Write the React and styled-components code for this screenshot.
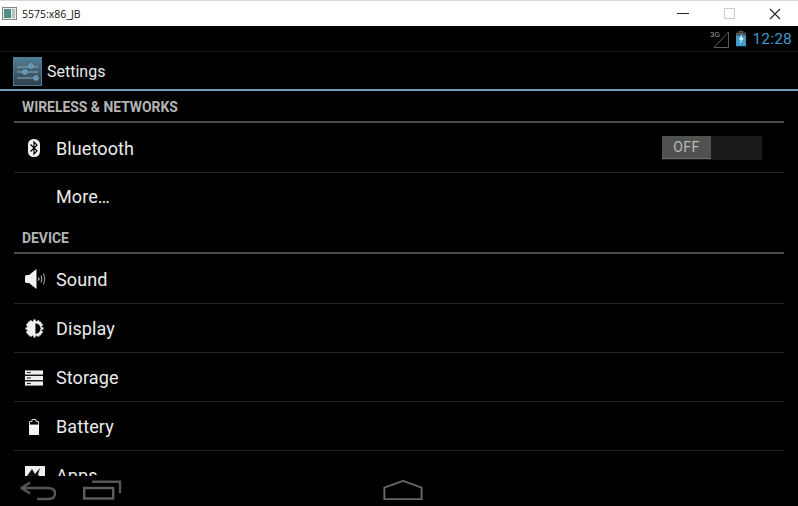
import React from 'react';
import styled, { createGlobalStyle } from 'styled-components';

const Global = createGlobalStyle`
    html, body { margin: 0; padding: 0; background: #000; }
    * { box-sizing: border-box; }
`

const Window = styled.div`
    width: 798px;
    height: 506px;
    display: flex;
    flex-direction: column;
    overflow: hidden;
    background: #000;
    font-family: Roboto, "Liberation Sans", sans-serif;
`

const TitleBar = styled.div`
    height: 26px;
    flex: none;
    display: flex;
    align-items: center;
    background: #fff;
    border-top: 1px solid #d8d8d8;
    padding-left: 2px;
`

const WindowTitle = styled.div`
    font-family: "Open Sans", "Liberation Sans", sans-serif;
    font-size: 10.5px;
    color: #111;
    margin-left: 4px;
    flex: 1;
`

const WindowButton = styled.div`
    width: 46px;
    height: 25px;
    display: flex;
    align-items: center;
    justify-content: center;
`

const StatusBar = styled.div`
    height: 26px;
    flex: none;
    display: flex;
    align-items: center;
    justify-content: flex-end;
    padding-right: 6px;
    border-bottom: 1px solid #141414;
`

const Clock = styled.div`
    font-size: 15.5px;
    color: #3f9cc6;
    margin-left: 6px;
    letter-spacing: 0.2px;
`

const ActionBar = styled.div`
    height: 39px;
    flex: none;
    display: flex;
    align-items: center;
    padding: 3px 0 0 13px;
    border-bottom: 2px solid #6f9dc0;
`

const ActionTitle = styled.div`
    font-size: 16px;
    color: #e8e8e8;
    margin: 0 0 2px 4px;
`

const List = styled.div`
    flex: 1;
    min-height: 0;
    overflow: hidden;
    padding: 0 14px;
`

const Header = styled.div`
    height: 32px;
    display: flex;
    align-items: flex-end;
    padding: 0 0 6px 8px;
    border-bottom: 2px solid #4a4a4a;
    font-size: 13.9px;
    font-weight: 700;
    color: #b4b4b4;
`

const Row = styled.div`
    height: ${props => props.$first ? 50 : 49}px;
    display: flex;
    align-items: center;
    border-bottom: ${props => props.$plain ? 'none' : '1px solid #262626'};
`

const IconSlot = styled.div`
    width: 42px;
    height: 20px;
    padding-left: ${props => props.$inset || 11}px;
    margin-top: 1px;
    flex: none;
    display: flex;
    align-items: center;
`

const Label = styled.div`
    font-size: 18px;
    color: #ebebeb;
    flex: 1;
    letter-spacing: 0.1px;
    padding-top: ${props => props.$top || 0}px;
    padding-bottom: ${props => props.$bottom || 0}px;
`

const Toggle = styled.div`
    width: 100px;
    height: 24px;
    background: #191c1a;
    margin-right: 22px;
`

const Thumb = styled.div`
    width: 49px;
    height: 23px;
    background: #505250;
    border-bottom: 1px solid #6a6a6a;
    display: flex;
    align-items: center;
    justify-content: center;
    font-size: 14px;
    letter-spacing: 0.5px;
    color: #b8b8b8;
    padding-top: 1px;
`

const NavBar = styled.div`
    height: 30px;
    flex: none;
    display: flex;
    align-items: center;
    background: #000;
    padding-left: 20px;
`

const NavSlot = styled.div`
    width: ${props => props.$w}px;
    height: 22px;
    flex: none;
    display: flex;
`

const AppFrameIcon = () => (
    <svg width="16" height="16" viewBox="0 0 16 16">
        <rect x="0.5" y="1.5" width="14" height="12" fill="#e8eeee" stroke="#7d8a8a" />
        <rect x="2" y="3" width="7" height="9" fill="#4f8f86" />
        <rect x="10" y="3" width="3" height="9" fill="#b5c2c2" />
    </svg>
)

const SettingsIcon = () => (
    <svg width="30" height="30" viewBox="0 0 30 30">
        <defs>
            <linearGradient id="sg" x1="0" y1="0" x2="0" y2="1">
                <stop offset="0" stopColor="#4f7f98" />
                <stop offset="1" stopColor="#2f3f4c" />
            </linearGradient>
        </defs>
        <rect x="0.5" y="0.5" width="28" height="28" fill="url(#sg)" stroke="#4d7c93" />
        <g stroke="#93a7b3" strokeWidth="1" fill="#4a95c4">
            <line x1="4" y1="10" x2="25" y2="10" />
            <line x1="4" y1="15" x2="25" y2="15" />
            <line x1="4" y1="21" x2="25" y2="21" />
            <circle cx="18" cy="9" r="2.2" />
            <circle cx="12" cy="15" r="2.2" />
            <circle cx="23" cy="21" r="2.2" />
        </g>
    </svg>
)

const BluetoothIcon = () => (
    <svg width="14" height="18" viewBox="0 0 14 18">
        <rect x="1" y="0" width="12" height="18" rx="5.5" fill="#efefef" />
        <path d="M3.5 5.5 L10 11.8 L7 15 V3 L10 6.2 L3.5 12.5" fill="none" stroke="#000" strokeWidth="1.2" />
    </svg>
)

const SoundIcon = () => (
    <svg width="21" height="20" viewBox="0 0 21 20">
        <path d="M0 7.5 Q0 6 2 6 H4 L11.5 0 V20 L4 14 H2 Q0 14 0 12.5 Z" fill="#f2f2f2" />
        <path d="M13.5 8.5 Q14.5 10 13.5 11.5" fill="none" stroke="#c8c8c8" strokeWidth="1.2" />
        <path d="M16 6.5 Q17.8 10 16 13.5" fill="none" stroke="#b8b8b8" strokeWidth="1" />
        <path d="M18.5 4.5 Q21 10 18.5 15.5" fill="none" stroke="#a8a8a8" strokeWidth="1" />
    </svg>
)

const DisplayIcon = () => (
    <svg width="19" height="19" viewBox="0 0 20 20">
        <g stroke="#efefef" strokeWidth="2.4">
            <line x1="10" y1="0.5" x2="10" y2="19.5" />
            <line x1="0.5" y1="10" x2="19.5" y2="10" />
            <line x1="3.3" y1="3.3" x2="16.7" y2="16.7" />
            <line x1="16.7" y1="3.3" x2="3.3" y2="16.7" />
            <line x1="5.5" y1="1.5" x2="14.5" y2="18.5" />
            <line x1="14.5" y1="1.5" x2="5.5" y2="18.5" />
            <line x1="1.5" y1="5.5" x2="18.5" y2="14.5" />
            <line x1="18.5" y1="5.5" x2="1.5" y2="14.5" />
        </g>
        <circle cx="10" cy="10" r="7.8" fill="#efefef" />
        <path d="M11 4.6 A5.4 5.4 0 0 1 11 15.4 Z" fill="#000" />
    </svg>
)

const StorageIcon = () => (
    <svg width="18" height="16" viewBox="0 0 19 16">
        <rect x="0" y="0" width="19" height="4.4" fill="#efefef" />
        <rect x="0" y="5.8" width="19" height="4.4" fill="#efefef" />
        <rect x="0" y="11.6" width="19" height="4.4" fill="#efefef" />
        <rect x="2" y="1.6" width="4" height="1.2" fill="#222" />
        <rect x="2" y="7.4" width="4" height="1.2" fill="#222" />
        <rect x="2" y="13.2" width="4" height="1.2" fill="#222" />
    </svg>
)

const BatteryIcon = () => (
    <svg width="10" height="16" viewBox="0 0 10 16">
        <path d="M3 0.5 H7 V2.5 H9.5 V6 H0.5 V2.5 H3 Z" fill="none" stroke="#d8d8d8" />
        <rect x="0" y="6" width="10" height="10" fill="#f4f4f4" />
    </svg>
)

const AppsIcon = () => (
    <svg width="20" height="20" viewBox="0 0 20 20">
        <rect x="0" y="0" width="20" height="20" fill="#efefef" />
        <path d="M2 10 L7 3 L10 8 L15 2 L13 9 L18 12 L10 18 L3 15 Z" fill="#111" />
    </svg>
)

const SignalIcon = () => (
    <svg width="26" height="18" viewBox="0 0 26 18">
        <path d="M4 17.5 H18.5 V2 Z" fill="none" stroke="#5c5c5c" />
        <text x="0" y="7" fontSize="8" fontFamily="Roboto, sans-serif" fill="#9a9a9a">3G</text>
    </svg>
)

const ChargeIcon = () => (
    <svg width="10" height="17" viewBox="0 0 11 17">
        <rect x="3" y="0" width="5" height="2" fill="#555" />
        <rect x="0" y="2" width="11" height="3" fill="#555" />
        <rect x="0" y="5" width="11" height="12" fill="#3f9cc6" />
        <path d="M7 3 L3 10 H5.5 L4 15 L8.5 8 H6 Z" fill="#e8f4fa" />
    </svg>
)

const BackIcon = () => (
    <svg width="38" height="22" viewBox="0 0 38 22">
        <path d="M10 2.5 L1.5 8 L10 13.5 M2 8 H28 Q35 8 35 13.5 Q35 19 28 19 H17" fill="none" stroke="#565656" strokeWidth="2.4" strokeLinejoin="round" />
    </svg>
)

const RecentIcon = () => (
    <svg width="40" height="22" viewBox="0 0 40 22">
        <rect x="1.2" y="8" width="29" height="10.5" fill="none" stroke="#5e5e5e" strokeWidth="2.4" />
        <path d="M9 1.8 H37 V13" fill="none" stroke="#565656" strokeWidth="2.4" />
    </svg>
)

const HomeIcon = () => (
    <svg width="42" height="22" viewBox="0 -1 42 23">
        <path d="M1.5 7 L21 0 L40.5 7 V19 H1.5 Z" fill="none" stroke="#666" strokeWidth="2" strokeLinejoin="round" />
    </svg>
)

export default function App() {
    return (
        <Window>
            <Global />
            <TitleBar>
                <AppFrameIcon />
                <WindowTitle>5575:x86_JB</WindowTitle>
                <WindowButton>
                    <svg width="12" height="2"><rect width="12" height="1" fill="#222" /></svg>
                </WindowButton>
                <WindowButton>
                    <svg width="11" height="11"><rect x="0.5" y="0.5" width="10" height="10" fill="none" stroke="#ccc" /></svg>
                </WindowButton>
                <WindowButton>
                    <svg width="12" height="12"><path d="M1 1 L11 11 M11 1 L1 11" stroke="#222" strokeWidth="1.1" /></svg>
                </WindowButton>
            </TitleBar>
            <StatusBar>
                <SignalIcon />
                <ChargeIcon />
                <Clock>12:28</Clock>
            </StatusBar>
            <ActionBar>
                <SettingsIcon />
                <ActionTitle>Settings</ActionTitle>
            </ActionBar>
            <List>
                <Header>WIRELESS &amp; NETWORKS</Header>
                <Row $first>
                    <IconSlot $inset={13}><BluetoothIcon /></IconSlot>
                    <Label $top={2}>Bluetooth</Label>
                    <Toggle><Thumb>OFF</Thumb></Toggle>
                </Row>
                <Row $plain>
                    <IconSlot />
                    <Label $bottom={2}>More…</Label>
                </Row>
                <Header>DEVICE</Header>
                <Row $first>
                    <IconSlot><SoundIcon /></IconSlot>
                    <Label $top={2}>Sound</Label>
                </Row>
                <Row>
                    <IconSlot><DisplayIcon /></IconSlot>
                    <Label>Display</Label>
                </Row>
                <Row>
                    <IconSlot><StorageIcon /></IconSlot>
                    <Label>Storage</Label>
                </Row>
                <Row>
                    <IconSlot $inset={15}><BatteryIcon /></IconSlot>
                    <Label>Battery</Label>
                </Row>
                <Row>
                    <IconSlot><AppsIcon /></IconSlot>
                    <Label>Apps</Label>
                </Row>
            </List>
            <NavBar>
                <NavSlot $w={63}><BackIcon /></NavSlot>
                <NavSlot $w={299}><RecentIcon /></NavSlot>
                <NavSlot $w={42}><HomeIcon /></NavSlot>
            </NavBar>
        </Window>
    );
}
